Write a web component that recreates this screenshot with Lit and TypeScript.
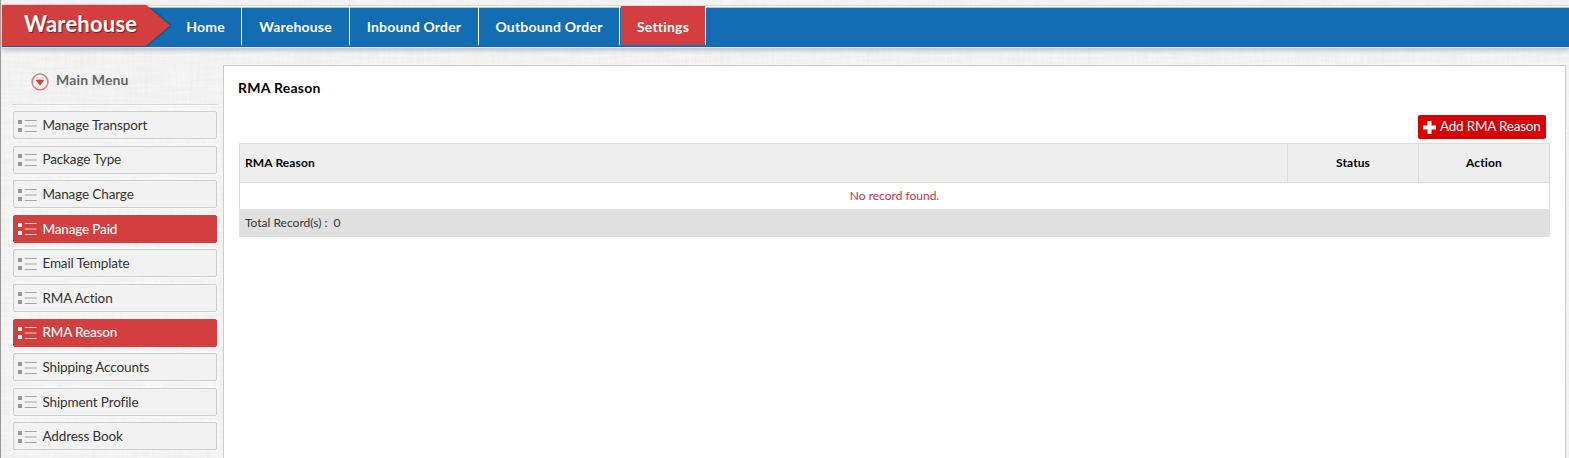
import { LitElement, html, css } from "lit";
import { customElement } from "lit/decorators.js";

const NAV = [
  { label: "Home", w: 72 },
  { label: "Warehouse", w: 108 },
  { label: "Inbound Order", w: 129 },
  { label: "Outbound Order", w: 141 },
];
const MENU = ["Manage Transport", "Package Type", "Manage Charge", "Manage Paid", "Email Template", "RMA Action", "RMA Reason", "Shipping Accounts", "Shipment Profile", "Address Book"];
const ACTIVE = new Set(["Manage Paid", "RMA Reason"]);

const listIcon = html`<svg class="list" width="19" height="12" viewBox="0 0 19 12">
  <path class="sq" d="M0 0h4v4H0zM0 8h4v4H0z"/>
  <path class="ln" d="M6.700 .5h12M6.700 6h12M6.700 11.500h12"/></svg>`;

@customElement("app-root")
export class AppRoot extends LitElement {
  static styles = css`
    :host { display: block; position: relative; height: 458px; overflow: hidden; background: #f1f1f1; font-family: Lato, sans-serif; box-sizing: border-box; }
    * { box-sizing: border-box; }
    .linen { position: absolute; inset: 0; width: 100%; height: 100%; opacity: .6; }
    .page { position: relative; height: 458px; border-left: 1px solid #999; padding-top: 5px; }
    header { display: flex; height: 43px; margin-left: 1px; background: linear-gradient(#dcdcdc 0 1px, #fff 1px 2px, #a9c5dc 2px 3px, #126db3 3px 42px, #d7e5f0 42px); box-shadow: 0 1px #ccc, 0 3px 4px #c4c4c4; }
    .brand { position: relative; width: 168px; height: 41px; flex: none; }
    .brand svg { display: block; overflow: visible; }
    .brand .shape { filter: drop-shadow(1px 0 1px rgba(0,0,0,.35)); }
    .brand span { position: absolute; left: 22px; top: 4px; font: 700 22px/30px Lato, sans-serif; letter-spacing: .2px; color: #fff; text-shadow: 1px 1px 1px #7c1d1d; white-space: nowrap; }
    nav { display: flex; padding-top: 2px; }
    nav a { height: 38px; border-right: 1px solid #fff; color: #fff; font: 700 14px/40px Lato, sans-serif; letter-spacing: .2px; text-align: center; white-space: nowrap; }
    nav .on { margin: -1px 0 0 1px; height: 39px; width: 85px; line-height: 42px; background: #d33e3e; }
    .body { display: flex; padding-top: 17px; }
    aside { width: 204px; margin-left: 12px; flex: none; }
    .head { display: flex; align-items: center; height: 40px; padding: 0 0 9px 18px; border-bottom: 1px solid #d6d6d6; box-shadow: 0 1px #fff; color: #666; font: 700 14px/20px Lato, sans-serif; letter-spacing: .15px; margin-bottom: 6px; gap: 7px; }
    .head svg { margin-top: 3px; }
    .item { display: flex; align-items: center; height: 28px; margin-bottom: 6.6px; border: 1px solid #ccc; border-radius: 2px; background: #f2f2f2; padding-left: 4px; gap: 5.4px; font-size: 13.5px; letter-spacing: -.12px; color: #333; box-shadow: 0 0 4px #fff; }
    .item .list { margin-top: 1px; }
    .item span { margin-top: -.4px; }
    .sq { fill: #999; }
    .ln { stroke: #a5a5a5; stroke-width: 1.2; }
    .item.on { background: #d33e3e; border-color: #d33e3e; color: #fff; font-weight: 500; letter-spacing: -.15px; }
    .on .sq { fill: #fff; }
    .on .ln { stroke: #f4cccc; }
    main { width: 1343px; flex: none; margin-left: 6px; height: 420px; background: #fff; border: 1px solid #ccc; padding: 12px 15px; }
    h1 { margin: 0 0 0 -1px; font: 700 14px/20px Lato, sans-serif; letter-spacing: .25px; color: #000; }
    .bar { display: flex; justify-content: flex-end; padding: 17px 4px 4px 0; }
    .add { display: flex; align-items: center; width: 128px; height: 24px; padding-left: 5px; gap: 4px; border-radius: 2px; background: #d60000; color: #fff; font-size: 13.5px; letter-spacing: -.22px; white-space: nowrap; }
    .add svg { margin-top: 1px; }
    .add span { margin-top: -3px; }
    .tr { display: grid; grid-template-columns: 1048px 131px 1fr; width: 1311px; }
    .th { background: #eee; border: 1px solid #ddd; border-right: 0; height: 40px; font: 700 12px/38px Lato, sans-serif; letter-spacing: .12px; color: #000; text-align: center; }
    .th:first-child { text-align: left; padding-left: 5px; }
    .th:last-child { border-right: 1px solid #ddd; }
    .none { width: 1311px; height: 26px; border: solid #ddd; border-width: 0 1px; font-size: 12px; line-height: 26px; text-align: center; color: #c6304a; }
    .total { width: 1311px; height: 28px; background: #e0e0e0; padding-left: 6px; font-size: 12px; line-height: 27px; color: #333; white-space: pre; }
  `;

  render() {
    return html`
      <svg class="linen">
        <filter id="h" x="0" y="0" width="100%" height="100%"><feTurbulence type="fractalNoise" baseFrequency=".03 .4" numOctaves="2" seed="3"/><feColorMatrix values="0 0 0 0 1  0 0 0 0 1  0 0 0 0 1  1.4 0 0 0 -.4"/></filter>
        <filter id="v" x="0" y="0" width="100%" height="100%"><feTurbulence type="fractalNoise" baseFrequency=".4 .03" numOctaves="2" seed="8"/><feColorMatrix values="0 0 0 0 .8  0 0 0 0 .8  0 0 0 0 .8  1 0 0 0 -.35"/></filter>
        <rect width="100%" height="100%" filter="url(#h)"/><rect width="100%" height="100%" filter="url(#v)"/>
      </svg>
      <div class="page">
        <header>
          <div class="brand">
            <svg width="168" height="41"><path class="shape" d="M0 0H144L168 20.500L144 41H0Z" fill="#d33e3e"/></svg>
            <span>Warehouse</span>
          </div>
          <nav>${NAV.map((n) => html`<a style="width:${n.w}px">${n.label}</a>`)}<a class="on">Settings</a></nav>
        </header>
        <div class="body">
          <aside>
            <div class="head">
              <svg width="18" height="18"><circle cx="9" cy="9" r="7.900" fill="#fbeeee" stroke="#e07878" stroke-width="1.500"/><path d="M4.500 6.700h9L9 12.500z" fill="#d33e3e"/></svg>
              <span>Main Menu</span>
            </div>
            ${MENU.map((m) => html`<div class="item ${ACTIVE.has(m) ? "on" : ""}">${listIcon}<span>${m}</span></div>`)}
          </aside>
          <main>
            <h1>RMA Reason</h1>
            <div class="bar"><div class="add"><svg width="13" height="13"><path d="M4.500 0h4v4.500H13v4H8.500V13h-4V8.500H0v-4h4.500z" fill="#fff"/></svg><span>Add RMA Reason</span></div></div>
            <div class="tr"><div class="th">RMA Reason</div><div class="th">Status</div><div class="th">Action</div></div>
            <div class="none">No record found.</div>
            <div class="total">Total Record(s) :  0</div>
          </main>
        </div>
      </div>`;
  }
}
